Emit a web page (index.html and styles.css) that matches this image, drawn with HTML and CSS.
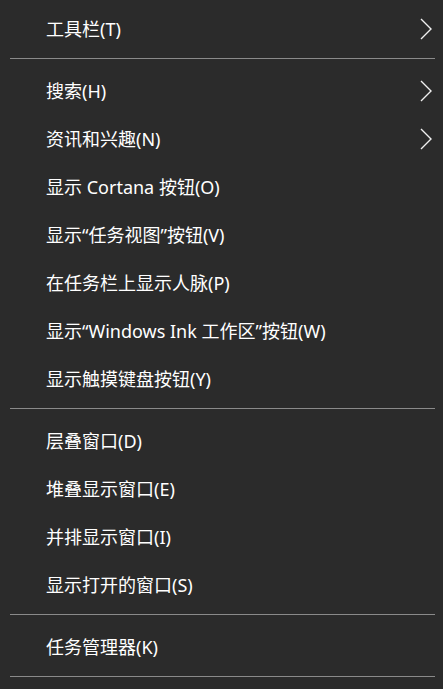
FILE: index.html
```html
<!DOCTYPE html>
<html lang="zh-CN">
<head>
<meta charset="utf-8">
<title>任务栏菜单</title>
<link rel="stylesheet" href="styles.css">
</head>
<body>
<div class="menu">
  <div class="item"><span class="label">工具栏(T)</span><svg class="chev" viewBox="0 0 12 22" width="12" height="22"><polyline points="1,1 11,11 1,21"/></svg></div>
  <div class="sep"></div>
  <div class="item"><span class="label">搜索(H)</span><svg class="chev" viewBox="0 0 12 22" width="12" height="22"><polyline points="1,1 11,11 1,21"/></svg></div>
  <div class="item"><span class="label">资讯和兴趣(N)</span><svg class="chev" viewBox="0 0 12 22" width="12" height="22"><polyline points="1,1 11,11 1,21"/></svg></div>
  <div class="item"><span class="label">显示 Cortana 按钮(O)</span></div>
  <div class="item"><span class="label">显示“任务视图”按钮(V)</span></div>
  <div class="item"><span class="label">在任务栏上显示人脉(P)</span></div>
  <div class="item"><span class="label">显示“Windows Ink 工作区”按钮(W)</span></div>
  <div class="item"><span class="label">显示触摸键盘按钮(Y)</span></div>
  <div class="sep"></div>
  <div class="item"><span class="label">层叠窗口(D)</span></div>
  <div class="item"><span class="label">堆叠显示窗口(E)</span></div>
  <div class="item"><span class="label">并排显示窗口(I)</span></div>
  <div class="item"><span class="label">显示打开的窗口(S)</span></div>
  <div class="sep"></div>
  <div class="item"><span class="label">任务管理器(K)</span></div>
  <div class="sep"></div>
</div>
<div class="taskbar"></div>
</body>
</html>
```

FILE: styles.css
```css
html, body {
  margin: 0;
  padding: 0;
  height: 100%;
  background: #2b2b2b;
}
body {
  display: flex;
  flex-direction: column;
  font-family: "Noto Sans", "Noto Sans CJK SC", sans-serif;
  color: #ffffff;
  font-size: 18px;
}
.menu {
  padding-top: 5px;
}
.item {
  height: 48px;
  display: flex;
  align-items: center;
  justify-content: space-between;
  padding-left: 46px;
  padding-right: 11px;
}
.label {
  line-height: 24px;
  white-space: nowrap;
}
.chev {
  display: block;
}
.chev polyline {
  fill: none;
  stroke: #f0f0f0;
  stroke-width: 1.4;
}
.sep {
  height: 1px;
  background: #8a8a8a;
  margin: 5px 8px 8px 10px;
}
.taskbar {
  flex: 1;
  margin-top: 0;
  background: #2b2b2b;
  border-top: 7px solid #2b2b2b;
  background-clip: content-box;
  background-color: #3a3a3a;
}
```
